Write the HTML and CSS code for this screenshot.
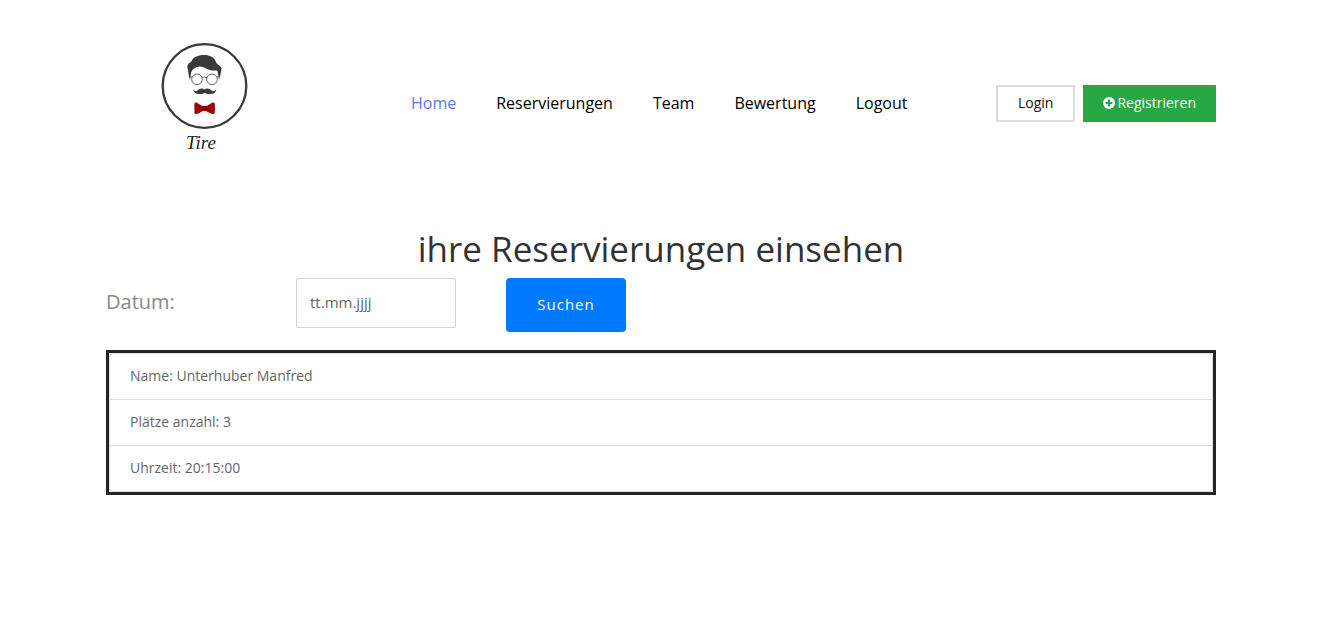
FILE: index.html
```html
<!DOCTYPE html>
<html lang="de">
<head>
<meta charset="utf-8">
<meta name="viewport" content="width=device-width, initial-scale=1">
<title>Reservierungen</title>
<link rel="stylesheet" href="styles.css">
</head>
<body>
<header class="header container">
  <a class="logo" href="#" aria-label="Tire">
    <svg class="logo-image" viewBox="0 0 110 120" width="110" height="120">
      <circle cx="54.5" cy="51" r="41.8" fill="none" stroke="#3a3a3a" stroke-width="2.3"/>
      <path fill="#3a3a3a" d="M40 45C38.800 42 38.300 38 38 34.500C36.500 31 38 28 41 27C43 22 48 20 54 20C60 20 64 22 66 27C67 30 70 30 71.500 33C71.500 37 70 41 69 45L68.300 40C67.500 36 68 35 65 35.500C59 36 55 32 50 31.500C45 32 42.500 34 41 38Z"/>
      <g fill="none" stroke="#3a3a3a" stroke-width=".8">
        <circle cx="47" cy="44.300" r="5.300"/>
        <circle cx="62" cy="44.300" r="5.300"/>
        <path d="M52 43Q54.500 40.500 57 43M40 41L42 42.500M69 41L67 42.500"/>
      </g>
      <path fill="#3a3a3a" d="M54.500 54.500C52 52.500 49 53.500 47.500 55.500C46 57 44.500 56 43 54.500C43.500 58 47 59.500 50 59C52 59 53.500 58.500 54.500 58C56 58.500 58 59.300 60.500 59C64 59 66 57 66.500 54C65 56 63 57 61.500 55.500C60 53.500 57 52.500 54.500 54.500Z"/>
      <path fill="#9c0505" d="M53 71C49 70 48 67 45 67.500C43.500 69 45 72 44.300 74C45 76 43.500 78 45.500 79C49 79 50 77 53 76H56C59 77 60 79 64 79C65.500 77 64.500 76 65 74C64.500 72 65.500 69 64 67.500C61 67 60 70 56 71Z"/>
      <path fill="none" stroke="#600" stroke-width=".7" d="M53 71V76M56 71V76"/>
      <text class="logo-name" x="36" y="114">Tire</text>
    </svg>
  </a>
  <nav class="nav" aria-label="Hauptmenü">
    <a class="nav-link active" href="#">Home</a>
    <a class="nav-link" href="#">Reservierungen</a>
    <a class="nav-link" href="#">Team</a>
    <a class="nav-link" href="#">Bewertung</a>
    <a class="nav-link" href="#">Logout</a>
  </nav>
  <div class="actions">
    <button class="btn btn-login" type="button">Login</button>
    <button class="btn btn-register" type="button">
      <svg class="icon" viewBox="0 0 12 12" width="12" height="12" aria-hidden="true"><circle cx="6" cy="6" r="6" fill="#fff"/><path d="M6 2.600V9.400M2.600 6H9.400" stroke="#28a745" stroke-width="2"/></svg>Registrieren
    </button>
  </div>
</header>
<main class="container">
  <h1 class="title">ihre Reservierungen einsehen</h1>
  <form class="search">
    <label class="search-label" for="datum">Datum:</label>
    <input class="search-input" id="datum" name="datum" type="text" placeholder="tt.mm.jjjj">
    <button class="search-button" type="button">Suchen</button>
  </form>
  <ul class="list">
    <li class="list-item">Name: Unterhuber Manfred</li>
    <li class="list-item">Plätze anzahl: 3</li>
    <li class="list-item">Uhrzeit: 20:15:00</li>
  </ul>
</main>
</body>
</html>
```
FILE: styles.css
```css
* { box-sizing: border-box; }
body {
  margin: 0;
  padding-right: 12px;
  background: #fff;
  color: #666;
  font-family: "Open Sans", sans-serif;
  font-size: 14px;
  line-height: 23px;
}
button, input { font-family: inherit; }
.container {
  max-width: 1140px;
  margin: 0 auto;
  padding: 0 15px;
}
.header {
  display: flex;
  align-items: center;
  padding-top: 35px;
}
.logo {
  margin: 0 151px 0 44px;
  line-height: 0;
}
.logo-name {
  fill: #222;
  font-family: "Liberation Serif", serif;
  font-size: 19px;
  font-style: italic;
}
.nav {
  display: flex;
  gap: 40px;
  padding-top: 17px;
}
.nav-link {
  color: #000;
  font-size: 16px;
  text-decoration: none;
}
.nav-link.active { color: #6376f1; }
.actions {
  display: flex;
  gap: 8px;
  margin-left: auto;
  padding-top: 17px;
}
.btn {
  display: flex;
  align-items: center;
  justify-content: center;
  gap: 2px;
  height: 37px;
  padding: 0 18px 2px;
  border: 2px solid #ddd;
  background: #fff;
  color: #111;
  font-size: 14px;
}
.btn-login { padding: 0 20px 2px; }
.btn-register {
  border-color: #28a745;
  background: #28a745;
  color: #fff;
}
.title {
  margin: 70px 0 5px;
  color: #323232;
  font-size: 35px;
  font-weight: 400;
  line-height: 48px;
  text-align: center;
}
.search {
  display: flex;
  align-items: flex-start;
}
.search-label {
  width: 190px;
  color: #888;
  font-size: 20px;
  line-height: 48px;
}
.search-input {
  width: 160px;
  height: 50px;
  margin-right: 50px;
  padding: 0 13px 2px;
  border: 1px solid #ced4da;
  border-radius: 2px;
  color: #666;
  font-size: 15px;
}
.search-input::placeholder { color: #666; }
.search-button {
  width: 120px;
  height: 54px;
  padding: 0 0 2px;
  border: 0;
  border-radius: 4px;
  background: #007bff;
  color: #fff;
  font-size: 15px;
  letter-spacing: 1px;
}
.list {
  margin: 18px 0 0;
  padding: 0;
  border: 3px solid #212529;
  list-style: none;
}
.list-item {
  padding: 10px 20px 12px;
  border: 1px solid #dfdfdf;
  border-top-width: 0;
}
.list-item:first-child {
  border-top-width: 1px;
  border-radius: 4px 4px 0 0;
}
.list-item:last-child { border-radius: 0 0 4px 4px; }
```
